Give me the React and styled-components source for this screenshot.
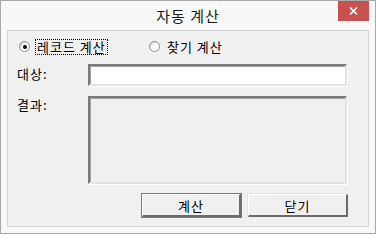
import React from 'react';
import styled, { createGlobalStyle } from 'styled-components';

const GlobalStyle = createGlobalStyle`
  body {
    margin: 0;
    background: #ffffff;
    font-family: "Noto Sans CJK KR", "Noto Sans", sans-serif;
  }
`;

const Window = styled.div`
  background: #f8f8f8;
  border: 1px solid #a9a9a9;
  box-sizing: border-box;
  display: flex;
  flex-direction: column;
  height: 234px;
  width: 376px;
`;

const TitleBar = styled.div`
  align-items: start;
  display: grid;
  grid-template-columns: 1fr auto 1fr;
  height: 29px;
`;

const Title = styled.div`
  color: #1a1a1a;
  font-family: "Noto Sans CJK KR", sans-serif;
  font-size: 15px;
  grid-column: 2;
  letter-spacing: 1px;
  line-height: 29px;
`;

const CloseButton = styled.div`
  align-items: center;
  background: #c75050;
  display: flex;
  grid-column: 3;
  height: 20px;
  justify-content: center;
  justify-self: end;
  margin-right: 6px;
  width: 31px;
`;

const Client = styled.div`
  background: #f0f0f0;
  border: 1px solid #d3d3d3;
  display: flex;
  flex: 1;
  flex-direction: column;
  margin: 0 6px 6px;
`;

const RadioRow = styled.div`
  align-items: center;
  display: flex;
  height: 17px;
  margin-top: 7px;
  padding-left: 11px;
`;

const RadioOption = styled.label`
  align-items: center;
  display: flex;
  font-size: 13px;
  gap: 5px;
  width: ${props => (props.$width ? `${props.$width}px` : 'auto')};
`;

const RadioCircle = styled.span`
  background: #ffffff;
  border: 1px solid #8e8f8f;
  border-radius: 50%;
  box-shadow: inset 1px 1px 0 #d6d6d6;
  box-sizing: border-box;
  flex-shrink: 0;
  height: 11px;
  position: relative;
  width: 11px;

  &::after {
    background: #000000;
    border-radius: 50%;
    content: '';
    display: ${props => (props.$checked ? 'block' : 'none')};
    height: 4px;
    left: 3px;
    position: absolute;
    top: 3px;
    width: 4px;
  }
`;

const RadioText = styled.span`
  border: 1px dotted ${props => (props.$focused ? '#000000' : 'transparent')};
  color: #000000;
  letter-spacing: 1px;
  line-height: 14px;
  padding: 0 1px;
`;

const FieldRow = styled.div`
  display: flex;
  margin-top: ${props => props.$top}px;
  padding-left: 9px;
`;

const FieldLabel = styled.div`
  color: #000000;
  font-size: 13px;
  letter-spacing: 1px;
  line-height: 13px;
  padding-top: ${props => props.$pad}px;
  width: 71px;
`;

const Sunken = styled.div`
  background: ${props => (props.$white ? '#ffffff' : '#f0f0f0')};
  border-style: solid;
  border-width: 2px;
  border-color: #7a7a7a #e3e3e3 #e3e3e3 #7a7a7a;
  box-shadow: inset 1px 1px 0 #a0a0a0, 1px 1px 0 #ffffff;
  box-sizing: border-box;
  height: ${props => props.$height}px;
  width: 259px;
`;

const ButtonRow = styled.div`
  display: flex;
  gap: 7px;
  justify-content: flex-end;
  margin-top: 10px;
  padding-right: 20px;
`;

const Button = styled.button`
  background: #f0f0f0;
  border-style: solid;
  border-width: 1px 2px 2px 1px;
  border-color: #ffffff #6b6b6b #6b6b6b #ffffff;
  box-shadow: ${props =>
    props.$default ? '0 0 0 1px #7a7a7a' : '-1px -1px 0 #e3e3e3'};
  color: #000000;
  font-family: "Noto Sans CJK KR", "Noto Sans", sans-serif;
  font-size: 13px;
  height: 23px;
  letter-spacing: 1px;
  line-height: 17px;
  padding: 0;
  width: ${props => props.$width}px;
`;

const App = () => {
  return (
    <>
      <GlobalStyle />
      <Window>
        <TitleBar>
          <Title>자동 계산</Title>
          <CloseButton>
            <svg width="9" height="8" viewBox="0 0 9 8">
              <path d="M1 0.5 L8 7.5 M8 0.5 L1 7.5" stroke="#ffffff" strokeWidth="1.6" />
            </svg>
          </CloseButton>
        </TitleBar>
        <Client>
          <RadioRow>
            <RadioOption $width={130}>
              <RadioCircle $checked />
              <RadioText $focused>레코드 계산</RadioText>
            </RadioOption>
            <RadioOption>
              <RadioCircle />
              <RadioText>찾기 계산</RadioText>
            </RadioOption>
          </RadioRow>
          <FieldRow $top={9}>
            <FieldLabel $pad={3}>대상:</FieldLabel>
            <Sunken $white $height={22} />
          </FieldRow>
          <FieldRow $top={10}>
            <FieldLabel $pad={2}>결과:</FieldLabel>
            <Sunken $height={88} />
          </FieldRow>
          <ButtonRow>
            <Button $default $width={99}>계산</Button>
            <Button $width={100}>닫기</Button>
          </ButtonRow>
        </Client>
      </Window>
    </>
  );
};

export default App;
